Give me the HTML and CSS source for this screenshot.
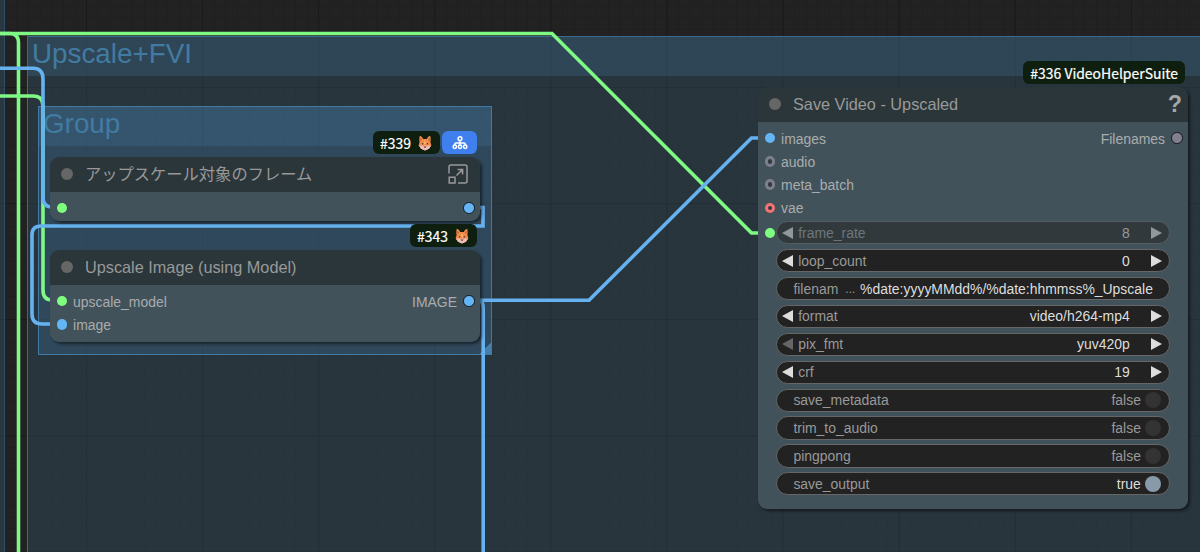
FILE: index.html
```html
<!DOCTYPE html>
<html lang="ja">
<head>
<meta charset="utf-8">
<title>Upscale+FVI</title>
<link rel="stylesheet" href="styles.css">
</head>
<body>
<svg width="0" height="0" class="defs">
  <symbol id="fox" viewBox="0 0 16 16">
    <path d="M2.8 .8 C4.4 1.2 5.6 2.6 6.2 4 H9.8 C10.4 2.6 11.6 1.2 13.2 .8 C13.8 3.4 13.8 5.4 13.4 7 L14.4 10.6 L13 12 L12 13.8 L8 15.4 L4 13.8 L3 12 L1.6 10.6 L2.6 7 C2.2 5.4 2.2 3.4 2.8 .8Z" fill="#f28b4b"/>
    <path d="M3.4 2.8 L5.2 4.8 L3.4 6.2Z M12.6 2.8 L10.8 4.8 L12.6 6.2Z" fill="#c4613f"/>
    <path d="M2 10.8 L5 10.4 L7 11.2 L8 9.6 L9 11.2 L11 10.4 L14 10.8 L12 13.8 L8 15.4 L4 13.8Z" fill="#f0bfb8"/>
    <path d="M8 4.6 L9.2 9 H6.8Z" fill="#ffb15c"/>
    <circle cx="5.6" cy="8.8" r=".8" fill="#5a3530"/><circle cx="10.4" cy="8.8" r=".8" fill="#5a3530"/>
    <path d="M6.6 11.4 H9.4 L8 13.2Z" fill="#402e39"/>
  </symbol>
</svg>
<main class="canvas">
  <section class="group group-left"></section>
  <section class="group group-outer"><h1 class="group-title">Upscale+FVI</h1></section>
  <section class="group group-inner"><h2 class="group-title">Group</h2><i class="resize"></i></section>

  <svg class="links" width="1200" height="552" viewBox="0 0 1200 552">
    <g class="link green">
      <path d="M0 33.5H552L751.5 233H759"/>
      <path d="M0 33.5H10Q18.5 33.5 18.5 43V552"/>
      <path d="M0 96H33Q43 96 43 106V290Q43 300 52 300"/>
    </g>
    <g class="link blue">
      <path d="M0 68.3H33Q43 68.3 43 79V197Q43 207 52 207"/>
      <path d="M479 207.5H483V226H41Q32 226 32 235V314Q32 324 42 324H52"/>
      <path d="M479 300.3H589L751.5 138H759"/>
      <path d="M479 300.3Q483.2 301 483.2 309V552"/>
    </g>
  </svg>

  <article class="node node-frame">
    <header class="node-head"><i class="state"></i><span class="name name-ja">アップスケール対象のフレーム</span>
      <svg class="expand" width="20" height="20" viewBox="0 0 20 20"><path d="M1 9.5V3Q1 1 3 1H17Q19 1 19 3V17Q19 19 17 19H10M1.2 13.2H7V19H1.2ZM8.5 11.5L14.3 5.7M9.6 5.4H14.6V10.4"/></svg>
    </header>
    <div class="node-body"><div class="slot"><i class="dot c-green"></i><i class="dot out c-blue"></i></div></div>
    <div class="badges"><span class="badge">#339<svg class="fox"><use href="#fox"/></svg></span>
      <span class="badge badge-blue"><svg width="16" height="14" viewBox="0 0 16 14"><circle cx="8" cy="2.7" r="1.9"/><circle cx="2.8" cy="10.8" r="1.7"/><circle cx="8" cy="10.8" r="1.7"/><circle cx="13.2" cy="10.8" r="1.7"/><path d="M8 4.6V9M2.8 9V8Q2.8 7 3.8 7H12.2Q13.2 7 13.2 8V9"/></svg></span></div>
  </article>

  <article class="node node-upscale">
    <header class="node-head"><i class="state"></i><span class="name">Upscale Image (using Model)</span></header>
    <div class="node-body">
      <div class="slot"><i class="dot c-green"></i><span>upscale_model</span><span class="right">IMAGE</span><i class="dot out c-blue"></i></div>
      <div class="slot"><i class="dot c-blue"></i><span>image</span></div>
    </div>
    <div class="badges"><span class="badge">#343<svg class="fox"><use href="#fox"/></svg></span></div>
  </article>

  <article class="node node-save">
    <header class="node-head"><i class="state"></i><span class="name">Save Video - Upscaled</span><b class="help">?</b></header>
    <div class="node-body">
      <div class="slot"><i class="dot c-blue"></i><span>images</span><span class="right">Filenames</span><i class="dot out c-gray"></i></div>
      <div class="slot"><i class="dot ring r-gray"></i><span>audio</span></div>
      <div class="slot"><i class="dot ring r-gray"></i><span>meta_batch</span></div>
      <div class="slot"><i class="dot ring r-red"></i><span>vae</span></div>
      <div class="widgets">
        <div class="row"><i class="dot c-green"></i><div class="widget disabled"><i class="prev"></i><span class="label">frame_rate</span><span class="value">8</span><i class="next"></i></div></div>
        <div class="row"><div class="widget"><i class="prev"></i><span class="label">loop_count</span><span class="value">0</span><i class="next"></i></div></div>
        <div class="row"><div class="widget text"><span class="label">filenam</span><span class="label dots">...</span><span class="value">%date:yyyyMMdd%/%date:hhmmss%_Upscale</span></div></div>
        <div class="row"><div class="widget"><i class="prev"></i><span class="label">format</span><span class="value">video/h264-mp4</span><i class="next"></i></div></div>
        <div class="row"><div class="widget"><i class="prev dim"></i><span class="label">pix_fmt</span><span class="value">yuv420p</span><i class="next"></i></div></div>
        <div class="row"><div class="widget"><i class="prev"></i><span class="label">crf</span><span class="value">19</span><i class="next"></i></div></div>
        <div class="row"><div class="widget toggle"><span class="label">save_metadata</span><span class="value">false</span><i class="knob"></i></div></div>
        <div class="row"><div class="widget toggle"><span class="label">trim_to_audio</span><span class="value">false</span><i class="knob"></i></div></div>
        <div class="row"><div class="widget toggle"><span class="label">pingpong</span><span class="value">false</span><i class="knob"></i></div></div>
        <div class="row"><div class="widget toggle on"><span class="label">save_output</span><span class="value">true</span><i class="knob"></i></div></div>
      </div>
    </div>
    <div class="badges"><span class="badge">#336 VideoHelperSuite</span></div>
  </article>
</main>
</body>
</html>
```
FILE: styles.css
```css
* { box-sizing: border-box; }
body { margin: 0; }
.defs { position: absolute; }
.canvas {
  position: relative; width: 1200px; height: 552px; overflow: hidden;
  font: 13.95px "Liberation Sans", Arial, sans-serif; color: #a9acae;
  background-color: #222;
  background-image:
    linear-gradient(90deg, #191919 1px, transparent 1px),
    linear-gradient(#191919 1px, transparent 1px),
    linear-gradient(90deg, #1f1f1f 1px, transparent 1px),
    linear-gradient(#1f1f1f 1px, transparent 1px);
  background-size: 116.1px 116.1px, 116.1px 116.1px, 11.61px 11.61px, 11.61px 11.61px;
  background-position: 86px 87px;
}

/* groups */
.group { position: absolute; border: 1px solid #3a6b8f; background: rgba(63, 120, 158, .25); }
.group-left { left: -20px; top: -20px; width: 25px; height: 600px; border-width: 1.5px; border-color: #2f4f66; }
.group-outer { left: 27px; top: 36px; width: 1300px; height: 700px; background: rgba(54, 98, 122, .31); }
.group-inner { left: 38px; top: 106px; width: 454px; height: 249px; border-color: #4079a3; background: rgba(65, 112, 150, .34); }
.group-title {
  margin: 0; padding-left: 4px; height: 39px; line-height: 34px;
  font-size: 27.8px; font-weight: 400; color: #427ba2;
  background: rgba(68, 120, 160, .27);
}
.resize { position: absolute; right: 0; bottom: 0; width: 11px; height: 11px; background: linear-gradient(135deg, transparent 50%, #4480aa 50%); }

/* links */
.links { position: absolute; left: 0; top: 0; }
.link path { fill: none; stroke-width: 3.6; }
.green path { stroke: #7ff884; }
.blue path { stroke: #66b2f0; }

/* nodes */
.node { position: absolute; width: 430px; border-radius: 9.3px; box-shadow: 2px 2px 3px rgba(0, 0, 0, .5); }
.node-frame { left: 50px; top: 157px; height: 64px; }
.node-upscale { left: 50px; top: 250px; height: 92px; }
.node-save { left: 758px; top: 87px; height: 422px; }
.node-head {
  display: flex; align-items: center; height: 35px; padding: 0 12px 1.5px 11.3px;
  border-radius: 9.3px 9.3px 0 0; background: #2a363a; font-size: 16.28px; color: #999;
}
.node-save .node-head { padding-right: 6px; }
.state { width: 12px; height: 12px; margin-right: 11.7px; border-radius: 50%; background: #666; }
.name { flex: 1; line-height: 20px; }
.name-ja { font-family: "Liberation Sans", "Noto Sans CJK JP", sans-serif; }
.expand { fill: none; stroke: #999; stroke-width: 1.5; }
.help { font: 700 23.3px/30px "Liberation Sans", sans-serif; color: #a4a7a8; }
.node-body { height: calc(100% - 35px); padding: 4.5px 5.5px 0 6.5px; border-radius: 0 0 9.3px 9.3px; background: #42525a; }
.slot { display: flex; align-items: center; height: 23.26px; line-height: 18px; }
.slot span { position: relative; top: .6px; }
.right { margin-left: auto; }
.dot { flex: none; width: 10.4px; height: 10.4px; margin-right: 6.2px; border-radius: 50%; }
.slot .out { width: 11.5px; height: 11.5px; margin: 0 0 0 6px; border: 1.5px solid #10161c; }
.slot i.out:nth-child(2) { margin-left: auto; }
.c-green { background: #7fff7f; }
.c-blue { background: #64b5f6; }
.c-gray { background: #808090; }
.ring { border: 3px solid; }
.r-gray { border-color: #7d7f8c; background: #303940; }
.r-red { border-color: #f27372; background: #303940; }

/* widgets */
.widgets { display: grid; gap: 4.65px; padding: 1.7px 12.5px 0 0; }
.row { display: flex; align-items: center; justify-content: flex-end; height: 23.26px; }
.row .dot { margin-right: 1px; }
.widget {
  display: flex; align-items: center; width: 394.5px; height: 23.26px; flex: none;
  padding: 0 7.2px 0 5.5px; border: 1.2px solid #666; border-radius: 12px;
  background: #222; color: #ddd; line-height: 18px;
}
.label { color: #999; }
.value { margin-left: auto; }
.prev, .next { border: solid transparent; border-width: 6px 0; }
.prev { border-right: 11.6px solid #ddd; margin-right: 4.8px; }
.next { border-left: 11.6px solid #ddd; margin-left: 21.5px; }
.dim { border-right-color: #666; }
.disabled { opacity: .5; }
.text { padding: 0 16.5px; }
.dots { margin-left: 7px; font-size: 12px; }
.toggle { padding: 0 8px 0 16.5px; }
.toggle .value { color: #999; }
.knob { width: 16.5px; height: 16.5px; margin-left: 4px; border-radius: 50%; background: #333; }
.toggle.on .value { color: #ddd; }
.on .knob { background: #8899aa; }

/* badges */
.badges { position: absolute; right: 3px; top: -26px; display: flex; gap: 2px; }
.badge {
  display: flex; align-items: center; height: 23.3px; padding: 0 7px; border-radius: 6px;
  background: #0f1f0f; color: #fff; white-space: pre;
  font: 400 13.95px "Noto Sans CJK JP", sans-serif; -webkit-text-stroke: .2px #fff;
}
.fox { width: 16px; height: 16px; margin-left: 6px; }
.badge-blue { width: 35px; padding: 0; justify-content: center; background: #4080ee; }
.badge-blue svg { fill: none; stroke: #fff; stroke-width: 1.5; }
```
